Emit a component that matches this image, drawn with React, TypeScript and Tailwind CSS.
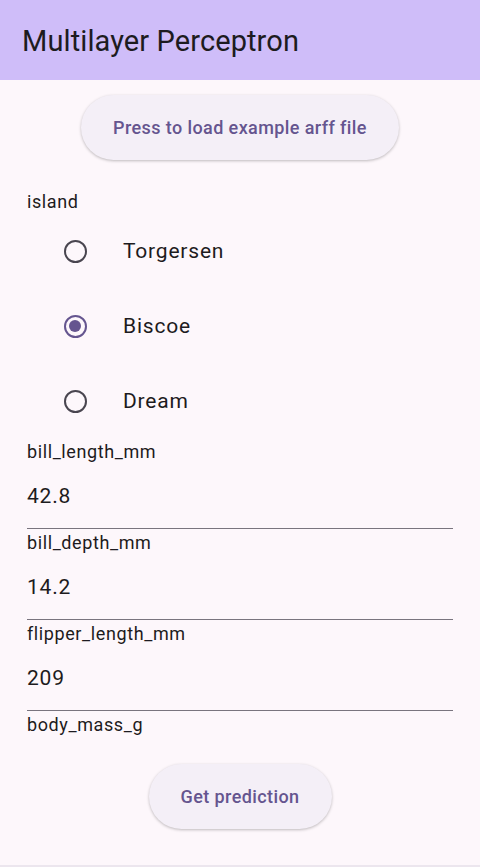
import React from 'react';

const islands = ['Torgersen', 'Biscoe', 'Dream'];

const fields = [
  { label: 'bill_length_mm', value: '42.8' },
  { label: 'bill_depth_mm', value: '14.2' },
  { label: 'flipper_length_mm', value: '209' },
];

const Radio: React.FC<{ checked: boolean }> = ({ checked }) => (
  <div
    className={`w-[23px] h-[23px] rounded-full border-[2.5px] flex items-center justify-center ${
      checked ? 'border-[#65558f]' : 'border-[#49454f]'
    }`}
  >
    {checked && <div className="w-[12px] h-[12px] rounded-full bg-[#65558f]" />}
  </div>
);

const PillButton: React.FC<{ label: string; width: string }> = ({ label, width }) => (
  <button
    className={`${width} h-[65px] rounded-full bg-[#f4eff7] text-[#65558f] text-[18px] font-medium tracking-[0.4px] shadow-[0_1px_3px_rgba(0,0,0,0.25)] flex items-center justify-center`}
  >
    {label}
  </button>
);

export default function App() {
  const selected = 'Biscoe';
  return (
    <div
      className="min-h-[867px] flex flex-col bg-[#fdf7fb] text-[#1d1b20]"
      style={{ fontFamily: 'Roboto, "Noto Sans", sans-serif' }}
    >
      <header className="h-[80px] bg-[#cfbdf9] flex items-center pl-[22px]">
        <h1 className="text-[29px] leading-none tracking-[0.1px] text-[#1d1b20] pt-[2px]">Multilayer Perceptron</h1>
      </header>

      <main className="flex-1 flex flex-col px-[27px]">
        <div className="flex justify-center mt-[15px]">
          <PillButton label="Press to load example arff file" width="w-[318px]" />
        </div>

        <div className="mt-[29px] h-[24px] flex items-center text-[18px] tracking-[0.6px]">island</div>

        <div className="flex flex-col">
          {islands.map((name) => (
            <div key={name} className="h-[75px] flex items-center">
              <div className="w-[96px] flex justify-center pt-[1px]">
                <Radio checked={name === selected} />
              </div>
              <span className="text-[21px] tracking-[0.8px] pt-[2px]">{name}</span>
            </div>
          ))}
        </div>

        {fields.map((f, i) => (
          <div key={f.label} className={`flex flex-col ${i === 0 ? 'mt-[1px]' : 'mt-[1.5px]'}`}>
            <div className="h-[24px] flex items-center text-[18px] tracking-[0.6px]">{f.label}</div>
            <div className="h-[65.5px] flex items-center pt-[3px] border-b-[1.5px] border-[#79747e] text-[21px] tracking-[0.8px]">
              {f.value}
            </div>
          </div>
        ))}

        <div className="mt-[1.5px] h-[24px] flex items-center text-[18px] tracking-[0.6px]">body_mass_g</div>

        <div className="flex justify-center mt-[28px]">
          <PillButton label="Get prediction" width="w-[183px]" />
        </div>
        <div className="flex-1" />
      </main>
      <div className="h-[2px] bg-[#ece6ee]" />
    </div>
  );
}
